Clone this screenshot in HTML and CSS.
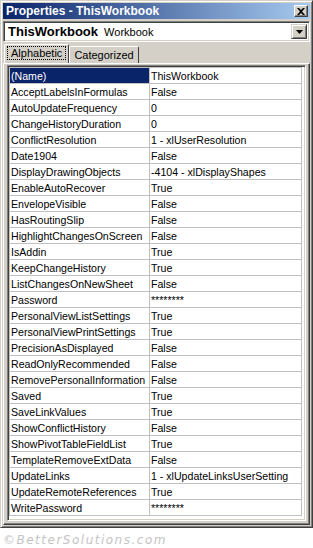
FILE: index.html
```html
<!DOCTYPE html>
<html>

<head>
  <title>Properties - ThisWorkbook</title>
  <link rel="stylesheet" href="styles.css">
</head>

<body>
  <div class="window">
    <!-- Title Bar -->
    <div class="titlebar">
      <span class="title">Properties - ThisWorkbook</span>
      <span class="close-btn">
        <svg width="8" height="7" viewBox="0 0 8 7"><path d="M0 0h2l2 2 2-2h2L5 3.5 8 7H6L4 5 2 7H0l3-3.5z" fill="#000"/></svg>
      </span>
    </div>

    <!-- Object combo box -->
    <div class="combo">
      <span class="combo-text"><b>ThisWorkbook</b> Workbook</span>
      <span class="combo-btn">
        <svg width="7" height="4" viewBox="0 0 7 4"><path d="M0 0h7L3.5 4z" fill="#000"/></svg>
      </span>
    </div>

    <!-- Tabs -->
    <div class="tabs">
      <div class="tab active"><span class="focus">Alphabetic</span></div>
      <div class="tab">Categorized</div>
    </div>

    <!-- Property grid -->
    <div class="panel">
      <div class="grid-frame">
        <table class="grid" id="grid"></table>
      </div>
    </div>
  </div>

  <div class="watermark">&copy;BetterSolutions.com</div>

  <script>
    const props = [
      ['(Name)', 'ThisWorkbook'],
      ['AcceptLabelsInFormulas', 'False'],
      ['AutoUpdateFrequency', '0'],
      ['ChangeHistoryDuration', '0'],
      ['ConflictResolution', '1 - xlUserResolution'],
      ['Date1904', 'False'],
      ['DisplayDrawingObjects', '-4104 - xlDisplayShapes'],
      ['EnableAutoRecover', 'True'],
      ['EnvelopeVisible', 'False'],
      ['HasRoutingSlip', 'False'],
      ['HighlightChangesOnScreen', 'False'],
      ['IsAddin', 'True'],
      ['KeepChangeHistory', 'True'],
      ['ListChangesOnNewSheet', 'False'],
      ['Password', '********'],
      ['PersonalViewListSettings', 'True'],
      ['PersonalViewPrintSettings', 'True'],
      ['PrecisionAsDisplayed', 'False'],
      ['ReadOnlyRecommended', 'False'],
      ['RemovePersonalInformation', 'False'],
      ['Saved', 'True'],
      ['SaveLinkValues', 'True'],
      ['ShowConflictHistory', 'False'],
      ['ShowPivotTableFieldList', 'True'],
      ['TemplateRemoveExtData', 'False'],
      ['UpdateLinks', '1 - xlUpdateLinksUserSetting'],
      ['UpdateRemoteReferences', 'True'],
      ['WritePassword', '********']
    ];

    const grid = document.getElementById('grid');
    props.forEach((p, i) => {
      const row = document.createElement('tr');
      if (i === 0) row.classList.add('selected');
      row.innerHTML = `<td class="name">${p[0]}</td><td class="value">${p[1]}</td>`;
      grid.appendChild(row);
    });
  </script>
</body>

</html>
```

FILE: styles.css
```css
/* Global Styles */
body {
  margin: 0;
  background-color: #FFFFFF;
  font-family: Tahoma, "Liberation Sans", Arial, sans-serif;
  font-size: 11px;
}

/* Window frame */
.window {
  width: 313px;
  height: 528px;
  box-sizing: border-box;
  background-color: #D4D0C8;
  border: 1px solid;
  border-color: #D4D0C8 #404040 #404040 #D4D0C8;
  box-shadow: inset 1px 1px 0 #FFFFFF, inset -1px -1px 0 #808080;
  padding: 2px;
  display: flex;
  flex-direction: column;
}

/* Title Bar */
.titlebar {
  height: 16px;
  flex-shrink: 0;
  background: linear-gradient(to right, #0A246A, #A6CAF0);
  display: flex;
  align-items: center;
  justify-content: space-between;
  padding: 0 2px 0 3px;
}

.title {
  color: #FFFFFF;
  font-weight: bold;
  font-size: 12px;
}

.close-btn {
  width: 14px;
  height: 12px;
  box-sizing: border-box;
  background-color: #D4D0C8;
  border: 1px solid;
  border-color: #FFFFFF #404040 #404040 #FFFFFF;
  box-shadow: inset -1px -1px 0 #808080;
  display: flex;
  align-items: center;
  justify-content: center;
}

/* Combo box */
.combo {
  margin-top: 2px;
  height: 21px;
  flex-shrink: 0;
  box-sizing: border-box;
  background-color: #FFFFFF;
  border: 1px solid;
  border-color: #808080 #FFFFFF #FFFFFF #808080;
  box-shadow: inset 1px 1px 0 #404040, inset -1px -1px 0 #D4D0C8;
  display: flex;
  align-items: center;
  justify-content: space-between;
  padding: 0 2px 0 4px;
}

.combo-text {
  font-size: 11px;
}

.combo-text b {
  font-size: 13px;
  margin-right: 3px;
}

.combo-btn {
  width: 16px;
  height: 15px;
  box-sizing: border-box;
  background-color: #D4D0C8;
  border: 1px solid;
  border-color: #D4D0C8 #404040 #404040 #D4D0C8;
  box-shadow: inset 1px 1px 0 #FFFFFF, inset -1px -1px 0 #808080;
  display: flex;
  align-items: center;
  justify-content: center;
}

/* Tabs */
.tabs {
  display: flex;
  align-items: flex-end;
  flex-shrink: 0;
  margin-top: 2px;
  padding-left: 1px;
  height: 19px;
}

.tab {
  height: 17px;
  box-sizing: border-box;
  border: 1px solid;
  border-bottom: none;
  border-color: #FFFFFF #404040 #FFFFFF #FFFFFF;
  border-radius: 2px 2px 0 0;
  padding: 2px 4px 0 4px;
  font-size: 11px;
}

.tab.active {
  height: 19px;
  padding: 2px 2px 0 2px;
  position: relative;
  z-index: 1;
  background-color: #D4D0C8;
}

.tab .focus {
  border: 1px dotted #000000;
  padding: 0 3px;
}

/* Property grid panel */
.panel {
  flex: 1;
  border: 1px solid;
  border-color: #FFFFFF #404040 #404040 #FFFFFF;
  box-shadow: inset -1px -1px 0 #808080;
  padding: 1px 3px 3px 3px;
}

.grid-frame {
  height: 100%;
  box-sizing: border-box;
  background-color: #FFFFFF;
  border: 1px solid;
  border-color: #808080 #FFFFFF #FFFFFF #808080;
  box-shadow: inset 1px 1px 0 #404040, inset -1px -1px 0 #D4D0C8;
  padding: 1px 3px 0 1px;
}

.grid {
  width: 100%;
  border-collapse: collapse;
  font-size: 10.6px;
}

.grid td {
  height: 15px;
  padding: 0 0 0 1px;
  border: 1px solid #C0C0C0;
  white-space: nowrap;
}

.grid td.name {
  width: 138px;
}

.grid tr.selected td.name {
  background-color: #0A246A;
  color: #FFFFFF;
}

/* Watermark */
.watermark {
  margin: 4px 0 0 3px;
  font-family: "DejaVu Sans", sans-serif;
  font-style: italic;
  font-size: 12px;
  line-height: 16px;
  letter-spacing: 1.5px;
  color: #C4C4C4;
}
```
